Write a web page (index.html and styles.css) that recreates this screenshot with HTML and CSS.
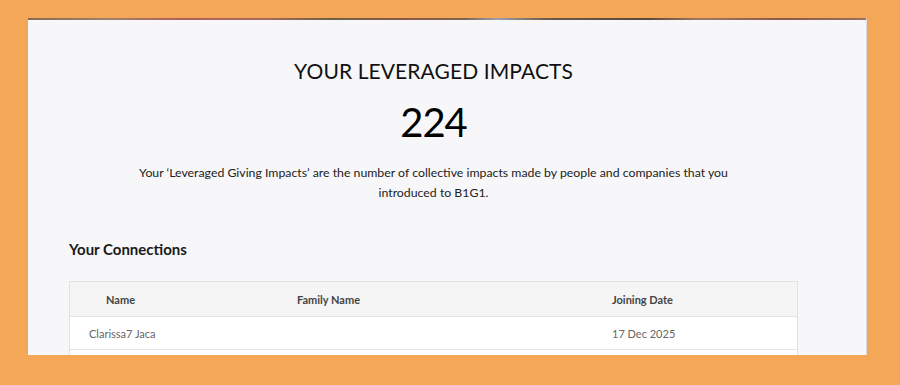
FILE: index.html
```html
<!DOCTYPE html>
<html lang="en">
<head>
    <meta charset="UTF-8">
    <meta name="viewport" content="width=device-width, initial-scale=1.0">
    <title>Leveraged Impacts</title>
    <link rel="stylesheet" href="styles.css">
</head>
<body>

<div class="panel">
    <div class="panel-strip"></div>
    <div class="panel-body">
        <h1 class="impacts-title">YOUR LEVERAGED IMPACTS</h1>
        <div class="impacts-count">224</div>
        <p class="impacts-text">Your ‘Leveraged Giving Impacts’ are the number of collective impacts made by people and companies that you introduced to B1G1.</p>

        <h2 class="section-title">Your Connections</h2>

        <div class="table">
            <div class="table-row table-head">
                <div class="cell cell-name">Name</div>
                <div class="cell cell-family">Family Name</div>
                <div class="cell cell-date">Joining Date</div>
            </div>
            <div class="table-row">
                <div class="cell cell-name first">Clarissa7 Jaca</div>
                <div class="cell cell-family"></div>
                <div class="cell cell-date">17 Dec 2025</div>
            </div>
            <div class="table-row">
                <div class="cell cell-name first">&nbsp;</div>
                <div class="cell cell-family"></div>
                <div class="cell cell-date"></div>
            </div>
        </div>
    </div>
</div>

</body>
</html>
```

FILE: styles.css
```css
* {
    margin: 0;
    padding: 0;
    box-sizing: border-box;
}
body {
    font-family: Lato, "Open Sans", sans-serif;
    background-color: #f4a857;
    height: 385px;
    overflow: hidden;
}
.panel {
    margin: 18px 33px 0 28px;
    height: 337px;
    background: #f7f7f9;
    border-right: 1px solid #d9d9dc;
    overflow: hidden;
}
.panel-strip {
    height: 2px;
    background: linear-gradient(90deg, #8a6a55 0%, #a08070 10%, #b0605a 18%, #a86a60 28%, #6e6048 36%, #8c5a48 46%, #7a6450 52%, #9aa0b0 56%, #6a5a48 62%, #5a4a3a 74%, #a07868 80%, #8a5a48 90%, #9a7060 100%);
}
.panel-body {
    width: 729px;
    margin-left: 41px;
    padding-top: 38px;
}
.impacts-title {
    text-align: center;
    font-size: 21px;
    font-weight: 400;
    color: #111;
    line-height: 26px;
    letter-spacing: 0.1px;
}
.impacts-count {
    text-align: center;
    font-size: 40px;
    letter-spacing: -1px;
    color: #000;
    line-height: 48px;
    margin-top: 14px;
}
.impacts-text {
    text-align: center;
    font-size: 12.3px;
    color: #222;
    line-height: 20px;
    margin: 17px auto 0;
    width: 600px;
}
.section-title {
    font-size: 15px;
    font-weight: 700;
    color: #1a1a1a;
    margin-top: 36px;
    line-height: 20px;
}
.table {
    margin-top: 22px;
    border: 1px solid #e2e2e4;
    background: #fff;
}
.table-row {
    display: grid;
    grid-template-columns: 227px 315px 1fr;
    height: 33px;
    align-items: center;
    border-bottom: 1px solid #e4e4e6;
    font-size: 11px;
    color: #666;
}
.table-head {
    background: #f5f5f6;
    color: #444;
    font-weight: 700;
    height: 35px;
}
.cell-name {
    padding-left: 36px;
}
.cell-name.first {
    padding-left: 19px;
}
```
